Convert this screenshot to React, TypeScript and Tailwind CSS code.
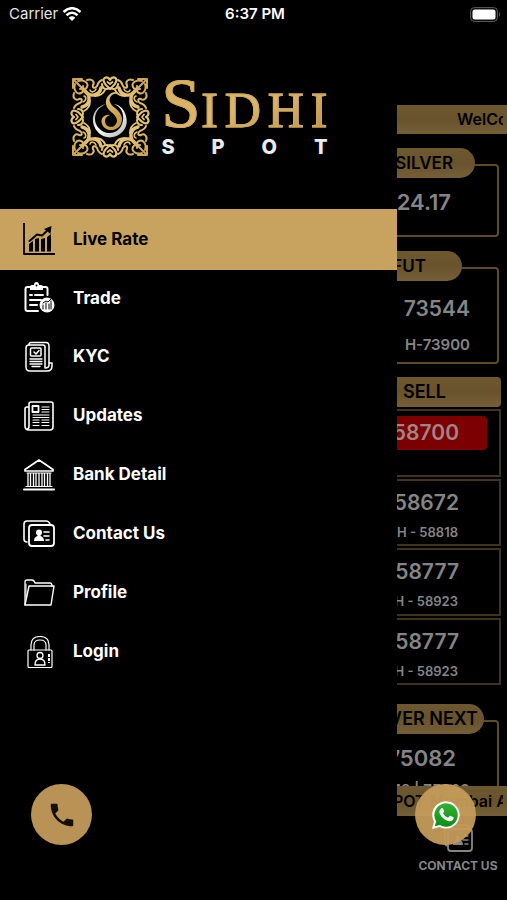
import type { ReactNode } from "react";

const GOLD = "url(#gold)";

function LogoMark() {
  return (
    <svg viewBox="0 0 80 82" className="h-[82px] w-20 shrink-0" fill="none" aria-hidden="true">
      <defs>
        <linearGradient id="gold" x1="0" y1="0" x2="80" y2="82" gradientUnits="userSpaceOnUse">
          <stop offset="0" stopColor="#c79d4c" />
          <stop offset="0.3" stopColor="#e6c67a" />
          <stop offset="0.6" stopColor="#c49a48" />
          <stop offset="1" stopColor="#dfc078" />
        </linearGradient>
        <linearGradient id="silver" x1="24" y1="24" x2="56" y2="60" gradientUnits="userSpaceOnUse">
          <stop offset="0" stopColor="#8e8e92" />
          <stop offset="0.5" stopColor="#ffffff" />
          <stop offset="1" stopColor="#b4b4b8" />
        </linearGradient>
        <g id="corner" stroke={GOLD} strokeLinecap="round" strokeLinejoin="round">
          <path d="M3 12V3H12" strokeWidth="2" />
          <path d="M4 4L14 14" strokeWidth="2" />
          <path d="M8 5 C14 3 19 7 17 11 C16 14 12 13 13 10" strokeWidth="2" />
          <path d="M5 8 C3 14 7 19 11 17 C14 16 13 12 10 13" strokeWidth="2" />
          <path d="M17 4 C22 2 25 6 23 9 C22 12 25 13 27 10 C28 7 29 5 32 4" strokeWidth="2" />
          <path d="M4 17 C2 22 6 25 9 23 C12 22 13 25 10 27 C7 28 5 29 4 32" strokeWidth="2" />
          <path d="M14 14 C20 22 29 20 31 12" strokeWidth="3.400" />
          <path d="M14 14 C22 20 20 29 12 31" strokeWidth="3.400" />
          <path d="M20 14 C21 17 25 16 26 13" strokeWidth="1.600" />
          <path d="M14 20 C17 21 16 25 13 26" strokeWidth="1.600" />
          <path d="M25 20 C29 20 33 18 35 14" strokeWidth="1.800" />
          <path d="M20 25 C20 29 18 33 14 35" strokeWidth="1.800" />
        </g>
        <g id="crest" stroke={GOLD} strokeLinecap="round" strokeLinejoin="round">
          <path d="M40 4 C38 0 32 1 34 6 C35 9 38 11 40 13 C42 11 45 9 46 6 C48 1 42 0 40 4Z" strokeWidth="2.200" />
          <path d="M37.500 6L40 8L42.500 6" strokeWidth="1.800" />
          <path d="M32 8 C32 13 36 14 40 12 C44 14 48 13 48 8" strokeWidth="2" />
        </g>
      </defs>
      <use href="#corner" />
      <use href="#corner" transform="matrix(-1 0 0 1 80 0)" />
      <use href="#corner" transform="matrix(1 0 0 -1 0 82)" />
      <use href="#corner" transform="matrix(-1 0 0 -1 80 82)" />
      <use href="#crest" />
      <use href="#crest" transform="matrix(1 0 0 -1 0 82)" />
      <use href="#crest" transform="matrix(0 1 1 0 0 1)" />
      <use href="#crest" transform="matrix(0 1 -1 0 80 1)" />
      <path
        d="M36 28 C27 30 22 37 23 46 C25 57 34 63 43 61 C53 59 59 50 56 40 C54 33 50 29 44 28 C51 31 54 37 53 44 C52 52 46 58 38 57 C31 56 25 50 25 43 C25 36 29 31 36 28Z"
        fill="url(#silver)"
      />
      <path
        d="M50 20 C49 15 43 15 40 18 C34 23 35 30 40 35 C45 39 49 43 46 48 C43 53 35 51 35 45 C35 42 37 40 40 39 C34 38 30 43 32 48 C35 56 47 56 51 48 C54 41 50 36 45 32 C40 28 38 24 41 20 C44 17 47 17 50 20Z"
        fill={GOLD}
      />
    </svg>
  );
}

function Glyph({ children }: { children: ReactNode }) {
  return (
    <svg
      viewBox="0 0 32 32"
      className="size-8 shrink-0"
      fill="none"
      stroke="currentColor"
      strokeLinecap="round"
      strokeLinejoin="round"
      aria-hidden="true"
    >
      {children}
    </svg>
  );
}

const menu: { label: string; icon: ReactNode }[] = [
  {
    label: "Live Rate",
    icon: (
      <Glyph>
        <path d="M1 1V31H31" strokeWidth="1.800" strokeLinecap="square" />
        <path d="M6.500 18 L14 11.500 L19 12.500 L26 6" strokeWidth="2" />
        <path d="M21 6L28.500 3L27.500 11Z" fill="currentColor" stroke="none" />
        <path d="M6 21L10 18V28.500H6ZM12 16L16 15V28.500H12ZM18 16L22 15V28.500H18ZM24 14L28 11V28.500H24Z" fill="currentColor" stroke="none" />
      </Glyph>
    ),
  },
  {
    label: "Trade",
    icon: (
      <Glyph>
        <path d="M8 5H4.500Q2.500 5 2.500 7V27Q2.500 29 4.500 29H15M19 5H22.500Q24.500 5 24.500 7V13" strokeWidth="2" />
        <path d="M7 8V5Q7 3 9 3H11Q11 0 13.500 0T16 3H18Q20 3 20 5V8Z" fill="currentColor" stroke="none" />
        <circle cx="13.500" cy="3.500" r="1" fill="#000" stroke="none" />
        <path d="M7 13H9M12 13H20M7 18H18M7 23H14" strokeWidth="2" />
        <circle cx="24" cy="23" r="7.500" fill="currentColor" stroke="none" />
        <path d="M20 27V23M23 27V21M26 27V22M28 27V19M20 21L23 19L25 20L28 17" stroke="#000" strokeWidth="1" />
      </Glyph>
    ),
  },
  {
    label: "KYC",
    icon: (
      <Glyph>
        <path d="M22 24V6Q22 4 20 4H6Q3 4 3 7V26Q3 30 7 30H24Q29 30 29 25V22H26V24Q26 27 22 27Z" strokeWidth="1.500" />
        <path d="M6 4Q6 1.500 8 1.500H23Q26 1.500 26 5V22" strokeWidth="1.500" />
        <rect x="7.500" y="7" width="10.500" height="8" rx="1" strokeWidth="1.500" />
        <path d="M11 11L13 13L16 9.500" strokeWidth="1.500" />
        <path d="M7 18H19M7 20.500H19M7 23H19M9 25.500H17" strokeWidth="1.300" />
      </Glyph>
    ),
  },
  {
    label: "Updates",
    icon: (
      <Glyph>
        <path d="M6 7H4Q2 7 2 9V26Q2 30 6 30H27Q30 30 30 27V4Q30 2 28 2H8Q6 2 6 4V26Q6 29 4 29" strokeWidth="1.600" />
        <rect x="9.500" y="6" width="6" height="6" strokeWidth="1.800" />
        <path d="M19 7H26M19 9.500H26M19 12H26M10 15H26M10 17.500H26M10 20H16M19 20H26M10 22.500H16M19 22.500H26M10 25.500H16M19 25.500H26" strokeWidth="1.100" />
      </Glyph>
    ),
  },
  {
    label: "Bank Detail",
    icon: (
      <Glyph>
        <path d="M2 10.500L16 1L30 10.500V12H2Z" strokeWidth="1.700" />
        <path d="M4 14H28M3 27.500H29" strokeWidth="1.200" />
        <path d="M5 14V27M7.500 14V27M10.500 14V27M13 14V27M16 14V27M19 14V27M21.500 14V27M24.500 14V27M27 14V27" strokeWidth="1.300" strokeLinecap="butt" />
        <path d="M1 30.500H31" strokeWidth="2" />
      </Glyph>
    ),
  },
  {
    label: "Contact Us",
    icon: (
      <Glyph>
        <path d="M4 24Q1 24 1 21V6Q1 3 4 3H23Q26 3 27 6" strokeWidth="1.600" />
        <rect x="6" y="7" width="25" height="21" rx="3" strokeWidth="1.800" />
        <circle cx="16" cy="14.500" r="3" fill="currentColor" stroke="none" />
        <path d="M14.500 15H17.500V18Q21 19 21 23H11Q11 19 14.500 18Z" fill="currentColor" stroke="none" />
        <path d="M21 14H26M21 18H26M23 22H26" strokeWidth="1.600" />
      </Glyph>
    ),
  },
  {
    label: "Profile",
    icon: (
      <Glyph>
        <path d="M2 28V5Q2 3 4 3H9Q11 3 12 6H27Q29 6 29 9" strokeWidth="1.300" />
        <path d="M6 9H31L28 28H2Z" strokeWidth="1.400" />
        <path d="M3 7V20" strokeWidth="1" />
      </Glyph>
    ),
  },
  {
    label: "Login",
    icon: (
      <Glyph>
        <path d="M8 14V9Q8 0.500 17 0.500T26 9V14M11 14V9Q11 4 17 4T23 9V14" strokeWidth="1.200" />
        <rect x="5" y="14" width="24" height="17.500" rx="1" strokeWidth="1.200" />
        <circle cx="17" cy="19.500" r="3" strokeWidth="1.300" />
        <path d="M12 29Q12 23 17 23T22 29Z" strokeWidth="1.300" />
        <path d="M26 18V27" strokeWidth="2" strokeDasharray="3 1" strokeLinecap="butt" />
      </Glyph>
    ),
  },
];

const rows = [
  { price: "58700", high: "", hot: true },
  { price: "58672", high: "H - 58818", hot: false },
  { price: "58777", high: "H - 58923", hot: false },
  { price: "58777", high: "H - 58923", hot: false },
];

const bar = "bg-linear-to-b from-[#6e582f] via-[#69532d] to-[#755f37]";

function StatusBar() {
  return (
    <header className="grid h-7 grid-cols-3 items-center pl-[9px] pr-1.5 text-[15px] leading-5">
      <div className="flex items-center gap-1 text-[#e4e4e4]">
        Carrier
        <svg viewBox="0 0 20 14" className="h-3.5 w-5" fill="none" stroke="#fff" strokeWidth="2.600" aria-label="Wi-Fi">
          <path d="M1.500 5Q10-2.500 18.500 5M4.500 8.300Q10 3.200 15.500 8.300" />
          <path d="M10 14L6.700 10.700Q10 8 13.300 10.700Z" fill="#fff" stroke="none" />
        </svg>
      </div>
      <time className="text-center font-semibold text-white">6:37 PM</time>
      <svg viewBox="0 0 31 15" className="h-[15px] w-[31px] justify-self-end" aria-label="Battery full">
        <rect x="0.500" y="0.500" width="27" height="14" rx="4" fill="#111" stroke="#555" />
        <rect x="2.500" y="2.500" width="23" height="10" rx="2.500" fill="#fff" />
        <path d="M29 5Q31 7.500 29 10Z" fill="#666" />
      </svg>
    </header>
  );
}

function Drawer() {
  return (
    <nav className="min-w-0 flex-1" aria-label="Main menu">
      <div className="flex h-[129px] justify-center gap-3 pt-12">
        <LogoMark />
        <div className="w-[166px]">
          <div className="flex h-[61px] items-baseline justify-between bg-linear-to-br from-[#d9ae5c] via-[#dcb76c] to-[#b98d43] bg-clip-text font-['Liberation_Serif',serif] text-[50px] leading-[56px] text-transparent [-webkit-text-stroke:1px_#d0a85c]">
            <span className="-mr-1.5 text-[70px]">S</span>
            <span>I</span>
            <span>D</span>
            <span>H</span>
            <span>I</span>
          </div>
          <div className="flex justify-between text-[20px] leading-5 font-extrabold text-[#ececf0]">
            <span>S</span>
            <span>P</span>
            <span>O</span>
            <span>T</span>
          </div>
        </div>
      </div>
      <ul className="mt-[53px] flex h-[471px] flex-col">
        {menu.map((item, i) => (
          <li key={item.label} className="flex min-h-0 flex-1 items-center">
            <a
              href="#"
              aria-current={i === 0 ? "page" : undefined}
              className={
                "flex h-[61px] w-full shrink-0 items-center gap-[18px] pl-[23px] text-[17px] font-bold " +
                (i === 0 ? "bg-[#c8a25f] text-black" : "text-white")
              }
            >
              {item.icon}
              {item.label}
            </a>
          </li>
        ))}
      </ul>
    </nav>
  );
}

function RatesPeek() {
  return (
    <main className="flex w-[110px] shrink-0 flex-col overflow-hidden whitespace-nowrap text-[#858585]">
      <div className="flex h-[758px] flex-col overflow-hidden pt-[77px]">
        <div className={"h-[29px] shrink-0 pr-1 " + bar}>
          <div className="overflow-hidden pl-[60px] text-[16px] leading-[29px] font-semibold text-black">WelCome</div>
        </div>

        <section className="mt-3.5 shrink-0">
          <h2 className={"relative flex h-[30px] w-[78px] justify-end rounded-r-full pr-[22px] text-[17px] leading-[30px] font-semibold text-black " + bar}>
            SILVER
          </h2>
          <div className="-mt-3.5 mr-2 flex h-[73px] justify-end rounded-r border-2 border-l-0 border-[#5f4a28] pt-4 pr-[46px] text-[22px] leading-10 font-semibold">
            24.17
          </div>
        </section>

        <section className="mt-3.5 shrink-0">
          <h2 className={"relative flex h-[30px] w-[65px] justify-end rounded-r-full pr-9 text-[17px] leading-[30px] font-semibold text-black " + bar}>
            FUT
          </h2>
          <div className="-mt-3.5 mr-2 flex h-[97px] flex-col items-end rounded-r border-2 border-l-0 border-[#5f4a28] pt-[22px] pr-[27px] font-semibold">
            <span className="text-[21px] leading-9">73544</span>
            <span className="text-[15px] leading-9">H-73900</span>
          </div>
        </section>

        <h2 className={"mt-[13px] mr-1.5 h-[30px] shrink-0 rounded-r pl-1.5 text-[18px] leading-[30px] font-semibold text-black " + bar}>
          SELL
        </h2>
        <div className="mt-0.5 mr-1.5 flex h-[276px] shrink-0 flex-col gap-0.5">
          {rows.map((row, i) => (
            <div key={i} className="flex flex-1 flex-col border-2 border-l-0 border-[#40331d] pt-[5px] font-semibold">
              <span
                className={
                  "mr-3 flex h-[34px] shrink-0 items-center justify-end rounded-r pr-7 text-[21px] " +
                  (row.hot ? "bg-[#7c0002] text-[#a08585]" : "")
                }
              >
                {row.price}
              </span>
              <span className="flex justify-end pr-[41px] text-[13px] leading-6">{row.high}</span>
            </div>
          ))}
        </div>

        <section className="mt-[19px] shrink-0">
          <h2 className={"relative flex h-[30px] w-[87px] justify-end rounded-r-full pr-1.5 text-[18px] leading-[30px] font-semibold text-black " + bar}>
            VER NEXT
          </h2>
          <div className="-mt-3.5 mr-2 flex h-[97px] flex-col items-end rounded-r border-2 border-l-0 border-[#5f4a28] pt-[18px] pr-[27px] font-semibold">
            <span className="pr-3.5 text-[22px] leading-9">75082</span>
            <span className="text-[15px] leading-7">H 12 | 75260</span>
          </div>
        </section>
      </div>

      <div className={"h-[30px] pr-1 " + bar}>
        <div className="overflow-hidden text-[16px] leading-[30px] font-semibold text-black">
          <span className="-ml-1">POT Mumbai A</span>
        </div>
      </div>
      <button type="button" className="flex flex-col items-center pt-1.5 pl-3 text-[12px] leading-5 font-bold">
        <Glyph>
          <path d="M6 24Q3 24 3 21V6Q3 3 6 3H24Q27 3 27 6" strokeWidth="1.600" />
          <rect x="6" y="7" width="24" height="22" rx="3" strokeWidth="1.800" />
          <path d="M11 23Q11 19 14 18V14H18V18Q21 19 21 23Z" fill="currentColor" stroke="none" />
          <path d="M21 14H26M21 18H26M23 22H26" strokeWidth="1.600" />
        </Glyph>
        <span className="mt-0.5">CONTACT US</span>
      </button>
    </main>
  );
}

export default function App() {
  return (
    <div className="relative flex min-h-screen flex-col overflow-hidden bg-black font-['Inter','Liberation_Sans',sans-serif]">
      <StatusBar />
      <div className="flex flex-1">
        <Drawer />
        <RatesPeek />
      </div>
      <button
        type="button"
        aria-label="Call"
        className="absolute bottom-[55px] left-[31px] flex size-[61px] items-center justify-center rounded-full bg-[#b99255]"
      >
        <svg viewBox="0 0 24 24" className="size-[30px]" fill="#141008" aria-hidden="true">
          <path d="M6.620 10.790c1.440 2.830 3.760 5.140 6.590 6.590l2.200-2.200c.27-.27.670-.36 1.020-.24 1.120.37 2.330.57 3.570.57.550 0 1 .45 1 1V20c0 .55-.45 1-1 1-9.390 0-17-7.610-17-17 0-.55.450-1 1-1h3.500c.55 0 1 .45 1 1 0 1.250.2 2.450.57 3.570.11.350.03.740-.25 1.020z" />
        </svg>
      </button>
      <button
        type="button"
        aria-label="WhatsApp"
        className="absolute right-[31px] bottom-[55px] flex size-[61px] items-center justify-center rounded-full bg-[#c49b5a]/95"
      >
        <svg viewBox="0 0 28 28" className="size-7" aria-hidden="true">
          <defs>
            <linearGradient id="leaf" x1="0" y1="0" x2="0" y2="1">
              <stop offset="0" stopColor="#35b235" />
              <stop offset="1" stopColor="#0b8d17" />
            </linearGradient>
          </defs>
          <path d="M0 28L2 20.600A13.700 13.700 0 1 1 7.500 26Z" fill="#fff" />
          <path d="M2.800 25.200L4.200 20.300A11.700 11.700 0 1 1 8 24Z" fill="url(#leaf)" />
          <path
            d="M9.200 7.500c.6-.6 1.600-.5 1.900.2l1 2.400c.2.500 0 .9-1.100 2.200 1.200 2.200 2.800 3.600 5.100 4.500l1.500-1.700c.3-.4.7-.4 1.100-.2l2.500 1.200c.8.4.3 2.200-.4 3-1 1-2.800 1.500-4.700.9-4-1.200-6.600-3.800-8.300-7.200-.9-2-.4-3.900 1.400-5.300Z"
            fill="#fff"
          />
        </svg>
      </button>
    </div>
  );
}
